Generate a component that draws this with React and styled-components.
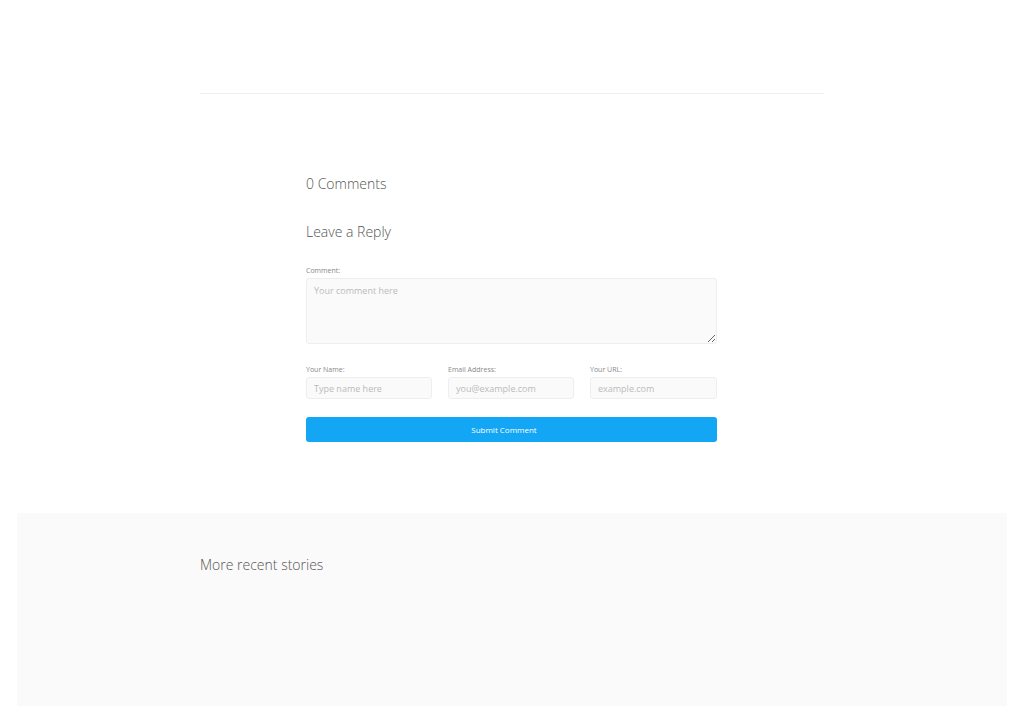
import React from 'react'
import styled, { createGlobalStyle } from 'styled-components';

const GlobalStyle = createGlobalStyle`
  body {
    margin: 0;
    background: #fff;
    font-family: 'Open Sans', 'Liberation Sans', sans-serif;
    color: #555;
  }
`;

const Header = styled.div`
  width: 624px;
  height: 93px;
  margin: 0 auto;
  border-bottom: 1px solid #eeeeee;
`;

const CommentsArea = styled.section`
  box-sizing: border-box;
  width: 412px;
  padding-right: 1px;
  margin: 80px auto 0;
`;

const Heading = styled.h3`
  margin: 0 0 ${p => p.$gap || 0}px;
  font-size: 14px;
  line-height: 20px;
  font-weight: 300;
  color: #555;
`;

const Form = styled.form`
  display: flex;
  flex-direction: column;
`;

const Field = styled.div`
  display: flex;
  flex-direction: column;
`;

const Label = styled.label`
  font-size: 7px;
  line-height: 10px;
  font-weight: 400;
  color: #888;
  margin: 1px 0 2px;
`;

const TextArea = styled.textarea`
  box-sizing: border-box;
  width: 100%;
  height: 66px;
  padding: 5px 7px;
  background: #fafafa;
  border: 1px solid #eeeeee;
  border-radius: 3px;
  font-family: inherit;
  font-size: 9px;
  color: #555;
  outline: none;
  &::placeholder { color: #bbb; }
`;

const FieldRow = styled.div`
  display: grid;
  grid-template-columns: 126px 126px 1fr;
  column-gap: 16px;
  margin-top: 20px;
`;

const Input = styled.input`
  box-sizing: border-box;
  width: 100%;
  height: 22px;
  padding: 0 7px;
  background: #fafafa;
  border: 1px solid #eeeeee;
  border-radius: 3px;
  font-family: inherit;
  font-size: 9px;
  color: #555;
  outline: none;
  &::placeholder { color: #bbb; }
`;

const SubmitButton = styled.button`
  margin-top: 18px;
  height: 25px;
  width: 100%;
  padding: 0 15px 0 0;
  border: none;
  border-radius: 3px;
  background: #12a6f4;
  color: #fff;
  font-family: inherit;
  font-size: 8px;
  cursor: pointer;
`;

const MoreStories = styled.section`
  margin: 71px 17px 17px;
  height: 193px;
  box-sizing: border-box;
  padding-top: 42px;
  background: #fafafa;
`;

const Inner = styled.div`
  width: 624px;
  margin: 0 auto;
`;

function App() {
  const fields = [
    { label: 'Your Name:', placeholder: 'Type name here' },
    { label: 'Email Address:', placeholder: 'you@example.com' },
    { label: 'Your URL:', placeholder: 'example.com' },
  ];

  return (
    <>
      <GlobalStyle />
      <Header />
      <CommentsArea>
        <Heading $gap={28}>0 Comments</Heading>
        <Heading $gap={23}>Leave a Reply</Heading>
        <Form onSubmit={e => e.preventDefault()}>
          <Field>
            <Label>Comment:</Label>
            <TextArea placeholder='Your comment here' />
          </Field>
          <FieldRow>
            {fields.map(f => (
              <Field key={f.label}>
                <Label>{f.label}</Label>
                <Input placeholder={f.placeholder} />
              </Field>
            ))}
          </FieldRow>
          <SubmitButton type='submit'>Submit Comment</SubmitButton>
        </Form>
      </CommentsArea>
      <MoreStories>
        <Inner>
          <Heading>More recent stories</Heading>
        </Inner>
      </MoreStories>
    </>
  )
}

export default App;
